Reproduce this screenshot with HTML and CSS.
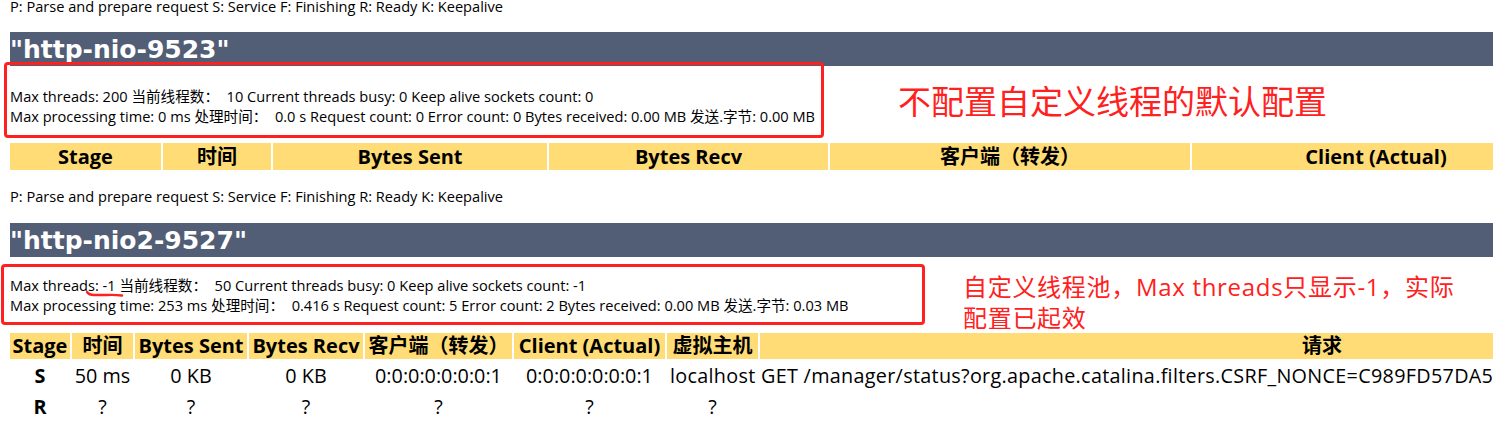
FILE: index.html
```html
<!DOCTYPE html>
<html>
<head>
<meta charset="utf-8">
<link rel="stylesheet" href="styles.css">
</head>
<body>
<p class="legend legend-first">P: Parse and prepare request S: Service F: Finishing R: Ready K: Keepalive</p>
<h1 class="conn-title">"http-nio-9523"</h1>
<div class="stats stats-first">
  <div>Max threads: 200 当前线程数：&nbsp; 10 Current threads busy: 0 Keep alive sockets count: 0</div>
  <div>Max processing time: 0 ms 处理时间：&nbsp; 0.0 s Request count: 0 Error count: 0 Bytes received: 0.00 MB 发送.字节: 0.00 MB</div>
</div>
<table class="workers workers-first">
  <tr>
    <th class="c1a">Stage</th><th class="c2a">时间</th><th class="c3a">Bytes Sent</th><th class="c4a">Bytes Recv</th><th class="c5a">客户端（转发）</th><th class="c6a">Client (Actual)</th>
  </tr>
</table>
<p class="legend legend-second">P: Parse and prepare request S: Service F: Finishing R: Ready K: Keepalive</p>
<h1 class="conn-title conn-second">"http-nio2-9527"</h1>
<div class="stats stats-second">
  <div>Max threads: -1 当前线程数：&nbsp; 50 Current threads busy: 0 Keep alive sockets count: -1</div>
  <div>Max processing time: 253 ms 处理时间：&nbsp; 0.416 s Request count: 5 Error count: 2 Bytes received: 0.00 MB 发送.字节: 0.03 MB</div>
</div>
<table class="workers workers-second">
  <tr>
    <th class="c1">Stage</th><th class="c2">时间</th><th class="c3">Bytes Sent</th><th class="c4">Bytes Recv</th><th class="c5">客户端（转发）</th><th class="c6">Client (Actual)</th><th class="c7">虚拟主机</th><th class="c8">请求</th>
  </tr>
  <tr>
    <td class="stage">S</td><td>50 ms</td><td>0 KB</td><td>0 KB</td><td>0:0:0:0:0:0:0:1</td><td>0:0:0:0:0:0:0:1</td><td class="left" colspan="2">localhost GET /manager/status?org.apache.catalina.filters.CSRF_NONCE=C989FD57DA5B1C0E2F</td>
  </tr>
  <tr>
    <td class="stage">R</td><td>?</td><td>?</td><td>?</td><td>?</td><td>?</td><td>?</td><td></td>
  </tr>
</table>

<div class="mark-box mark-box-1"></div>
<div class="note note-1">不配置自定义线程的默认配置</div>
<div class="mark-box mark-box-2"></div>
<svg class="underline-mark" width="40" height="10" viewBox="0 0 40 10"><path d="M1 3 Q3 6 8 6 L20 6 Q28 5.5 36 6.5" fill="none" stroke="#ff2020" stroke-width="2.4" stroke-linecap="round"/></svg>
<div class="note note-2">自定义线程池，Max threads只显示-1，实际<br>配置已起效</div>
</body>
</html>
```

FILE: styles.css
```css
html { overflow: hidden; }
body {
  margin: 0;
  padding: 0 0 0 10px;
  width: 2200px;
  background: #fff;
  color: #000;
  font-family: "Open Sans", "Noto Sans CJK SC", sans-serif;
  position: relative;
}
.legend {
  margin: 0;
  font-size: 14.6px;
  line-height: 16px;
  height: 16px;
}
.legend-first { margin-top: -2px; }
.legend-second { margin-top: 16px; }
.conn-title {
  margin: 18px 0 0 0;
  width: 1483px;
  height: 34px;
  background: #525d76;
  color: #fff;
  font-family: "DejaVu Sans", sans-serif;
  font-weight: bold;
  font-size: 25px;
  line-height: 35px;
  overflow: visible;
}
.conn-second { margin-top: 19px; }
.stats {
  font-size: 14.6px;
  line-height: 20px;
}
.stats-first { margin-top: 20px; }
.stats-second { margin-top: 18px; }
.workers {
  border-collapse: separate;
  border-spacing: 2px;
  margin-left: -2px;
  table-layout: fixed;
}
.workers-first { margin-top: 15px; }
.workers-second { margin-top: 16px; }
.workers th {
  background: #ffdc75;
  font-weight: bold;
  font-size: 20px;
  height: 26px;
  line-height: 26px;
  padding: 0;
  text-align: center;
  white-space: nowrap;
  overflow: hidden;
}
.workers-first th { height: 27px; line-height: 27px; }
.workers td {
  font-size: 19.8px;
  height: 29px;
  line-height: 29px;
  padding: 0;
  text-align: center;
  white-space: nowrap;
}
.workers td.stage { font-weight: bold; }
.workers td.left { text-align: left; padding-left: 3px; letter-spacing: 0.3px; }

.c1a { width: 151px; }
.c2a { width: 108px; }
.c3a { width: 274px; }
.c4a { width: 279px; }
.c5a { width: 360px; }
.c6a { width: 368px; }

.c1 { width: 60px; }
.c2 { width: 61px; }
.c3 { width: 112px; }
.c4 { width: 114px; }
.c5 { width: 147px; }
.c6 { width: 151px; }
.c7 { width: 91px; }
.c8 { width: 1124px; }

.mark-box {
  position: absolute;
  border: 3px solid #ff2020;
  border-radius: 4px;
  box-sizing: border-box;
}
.mark-box-1 { left: 4px; top: 62px; width: 820px; height: 76px; }
.mark-box-2 { left: 1px; top: 264px; width: 924px; height: 61px; }
.note {
  position: absolute;
  color: #ff2020;
  font-family: "Noto Sans CJK SC", sans-serif;
  white-space: nowrap;
}
.note-1 { left: 898px; top: 78px; font-size: 33px; line-height: 44px; }
.note-2 { left: 963px; top: 271px; font-size: 24px; line-height: 31px; letter-spacing: 0.7px; font-family: "Open Sans", "Noto Sans CJK SC", sans-serif; }
.underline-mark { position: absolute; left: 86px; top: 289px; }
```
